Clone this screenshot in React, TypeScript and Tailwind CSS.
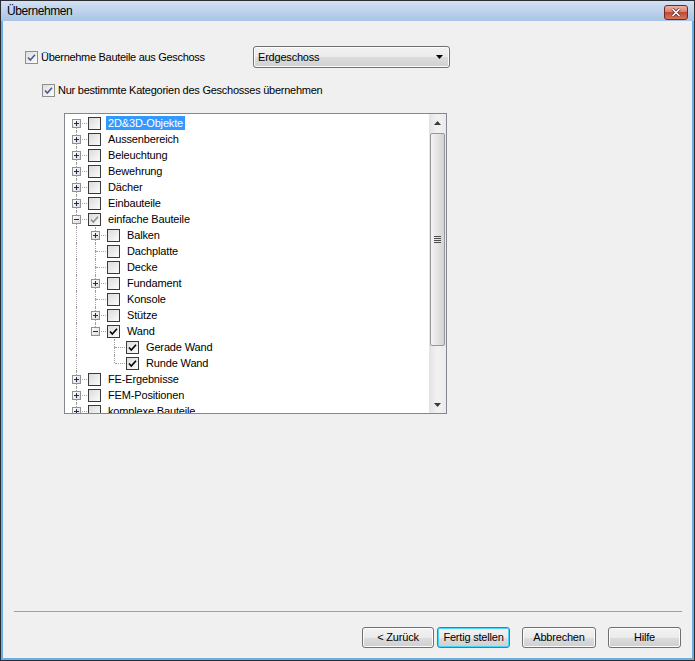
import React from 'react'

type Row = {
  label: string
  level: number
  exp?: '+' | '-'
  check?: 'gray' | 'black'
  first?: boolean
  last?: boolean
  sel?: boolean
  guides?: boolean[]
}

const rows: Row[] = [
  { label: '2D&3D-Objekte', level: 0, exp: '+', first: true, sel: true },
  { label: 'Aussenbereich', level: 0, exp: '+' },
  { label: 'Beleuchtung', level: 0, exp: '+' },
  { label: 'Bewehrung', level: 0, exp: '+' },
  { label: 'Dächer', level: 0, exp: '+' },
  { label: 'Einbauteile', level: 0, exp: '+' },
  { label: 'einfache Bauteile', level: 0, exp: '-', check: 'gray' },
  { label: 'Balken', level: 1, exp: '+', guides: [true] },
  { label: 'Dachplatte', level: 1, guides: [true] },
  { label: 'Decke', level: 1, guides: [true] },
  { label: 'Fundament', level: 1, exp: '+', guides: [true] },
  { label: 'Konsole', level: 1, guides: [true] },
  { label: 'Stütze', level: 1, exp: '+', guides: [true] },
  { label: 'Wand', level: 1, exp: '-', check: 'black', last: true, guides: [true] },
  { label: 'Gerade Wand', level: 2, check: 'black', guides: [true, false] },
  { label: 'Runde Wand', level: 2, check: 'black', last: true, guides: [true, false] },
  { label: 'FE-Ergebnisse', level: 0, exp: '+' },
  { label: 'FEM-Positionen', level: 0, exp: '+' },
  { label: 'komplexe Bauteile', level: 0, exp: '+' },
]

function Tick({ color }: { color: string }) {
  return (
    <svg width="11" height="11" viewBox="0 0 11 11">
      <path d="M2 5.5 L4.3 8 L9 2.8" fill="none" stroke={color} strokeWidth="1.6" />
    </svg>
  )
}

// checkbox inside the tree view (classic state images)
function TreeCheck({ state }: { state?: 'gray' | 'black' }) {
  return (
    <span className="w-[13px] h-[13px] shrink-0 border border-[#3a3a3a] bg-gradient-to-br from-[#dcdcdc] to-[#fbfbfb] flex items-center justify-center">
      {state === 'black' && <Tick color="#000" />}
      {state === 'gray' && <Tick color="#8e8e8e" />}
    </span>
  )
}

// Win7 style dialog checkbox
function DlgCheck() {
  return (
    <span className="w-[13px] h-[13px] shrink-0 border border-[#8e8f8f] bg-gradient-to-br from-[#dedede] to-[#fbfbfb] flex items-center justify-center">
      <Tick color="#4c5c85" />
    </span>
  )
}

function Expander({ sign }: { sign: '+' | '-' }) {
  return (
    <span className="absolute left-[5px] top-[4px] w-[9px] h-[9px] border border-[#919191] bg-gradient-to-br from-white to-[#dcdcdc] flex items-center justify-center">
      <svg width="7" height="7" viewBox="0 0 7 7">
        <path d="M1 3.5 H6" stroke="#1c2d4f" strokeWidth="1" />
        {sign === '+' && <path d="M3.5 1 V6" stroke="#1c2d4f" strokeWidth="1" />}
      </svg>
    </span>
  )
}

function TreeRow({ r }: { r: Row }) {
  return (
    <div className="flex h-[16px] items-center shrink-0">
      {(r.guides ?? []).map((g, i) => (
        <span key={i} className="relative w-[19px] h-[16px] shrink-0">
          {g && <span className="absolute left-[9px] top-0 h-[16px] border-l border-dotted border-[#a0a0a0]" />}
        </span>
      ))}
      <span className="relative w-[19px] h-[16px] shrink-0">
        {!r.first && <span className="absolute left-[9px] top-0 h-[8px] border-l border-dotted border-[#a0a0a0]" />}
        {!r.last && <span className="absolute left-[9px] top-[8px] h-[8px] border-l border-dotted border-[#a0a0a0]" />}
        <span className="absolute left-[10px] top-[8px] w-[10px] border-t border-dotted border-[#a0a0a0]" />
        {r.exp && <Expander sign={r.exp} />}
      </span>
      <span className="ml-[2px]">
        <TreeCheck state={r.check} />
      </span>
      <span
        className={`ml-[5px] px-[2px] h-[14px] leading-[14px] whitespace-nowrap tracking-[-0.15px] ${
          r.sel ? 'bg-[#3399ff] text-white' : 'text-black'
        }`}
      >
        {r.label}
      </span>
    </div>
  )
}

function ScrollBar() {
  return (
    <div className="w-[17px] h-full shrink-0 bg-gradient-to-r from-[#e3e3e3] via-[#f2f2f2] to-[#ebebeb] flex flex-col">
      <div className="h-[17px] flex items-center justify-center">
        <svg width="7" height="4" viewBox="0 0 7 4">
          <path d="M0 4 L3.5 0 L7 4 Z" fill="#3b3b3b" />
        </svg>
      </div>
      <div className="mt-[2px] mx-[1px] h-[213px] rounded-[2px] border border-[#979797] bg-gradient-to-r from-[#f3f3f3] via-[#e4e4e4] to-[#d4d4d4] flex items-center justify-center">
        <div className="flex flex-col gap-[1px]">
          <span className="w-[7px] h-px bg-[#4d4d4d]" />
          <span className="w-[7px] h-px bg-[#4d4d4d]" />
          <span className="w-[7px] h-px bg-[#4d4d4d]" />
          <span className="w-[7px] h-px bg-[#4d4d4d]" />
        </div>
      </div>
      <div className="flex-1" />
      <div className="h-[17px] flex items-center justify-center">
        <svg width="7" height="4" viewBox="0 0 7 4">
          <path d="M0 0 L3.5 4 L7 0 Z" fill="#3b3b3b" />
        </svg>
      </div>
    </div>
  )
}

function Button({ label, width, primary }: { label: string; width: string; primary?: boolean }) {
  return (
    <div
      className={`${width} h-[21px] rounded-[3px] border ${
        primary ? 'border-[#3c7fb1] shadow-[inset_0_0_0_1px_#48d6f8]' : 'border-[#707070] shadow-[inset_0_0_0_1px_#fcfcfc]'
      } bg-[linear-gradient(#f2f2f2_0%,#ebebeb_50%,#dddddd_50%,#cfcfcf_100%)] flex items-center justify-center text-black tracking-[-0.2px]`}
    >
      {label}
    </div>
  )
}

export default function App() {
  return (
    <div className="w-[695px] h-[661px] bg-[#2a2e33] p-px flex flex-col font-['Liberation_Sans',Arial,sans-serif] text-[11px]">
      {/* Title bar */}
      <div className="h-[20px] shrink-0 bg-gradient-to-b from-[#d3e1f2] to-[#a8c4e6] flex items-center pl-[6px] pr-[6px]">
        <span className="text-[12px] text-black tracking-[-0.4px]">Übernehmen</span>
        <div className="ml-auto mt-[2px] w-[24px] h-[15px] rounded-[3px] border border-[#6e2a1f] bg-[linear-gradient(#eab3a6_0%,#d9796a_50%,#c04a34_50%,#d8755c_100%)] flex items-center justify-center">
          <svg width="10" height="9" viewBox="0 0 10 9">
            <path d="M1.5 1 L8.5 8 M8.5 1 L1.5 8" stroke="#5a2a24" strokeWidth="3" />
            <path d="M1.5 1 L8.5 8 M8.5 1 L1.5 8" stroke="#fff" strokeWidth="1.6" />
          </svg>
        </div>
      </div>

      {/* Body */}
      <div className="flex-1 border-x-2 border-b-2 border-[#6aaee2] bg-[#f0f0f0] flex flex-col">
        <div className="mt-[25px] h-[22px] flex items-center">
          <div className="ml-[22px] w-[228px] flex items-center gap-[3px]">
            <DlgCheck />
            <span className="tracking-[-0.3px]">Übernehme Bauteile aus Geschoss</span>
          </div>
          <div className="w-[197px] h-[22px] rounded-[3px] border border-[#707070] shadow-[inset_0_0_0_1px_#fcfcfc] bg-[linear-gradient(#f2f2f2_0%,#ebebeb_50%,#dddddd_50%,#cfcfcf_100%)] flex items-center pl-[4px] pr-[6px]">
            <span className="text-black tracking-[-0.2px]">Erdgeschoss</span>
            <svg className="ml-auto" width="7" height="4" viewBox="0 0 7 4">
              <path d="M0 0 L3.5 4 L7 0 Z" fill="#000" />
            </svg>
          </div>
        </div>

        <div className="mt-[15px] ml-[39px] h-[14px] flex items-center gap-[3px]">
          <DlgCheck />
          <span className="tracking-[-0.25px]">Nur bestimmte Kategorien des Geschosses übernehmen</span>
        </div>

        {/* Tree view */}
        <div className="mt-[16px] ml-[61px] w-[383px] h-[301px] border border-[#828790] bg-white flex overflow-hidden">
          <div className="flex-1 pl-[2px] pt-[1px] flex flex-col overflow-hidden">
            {rows.map((r, i) => (
              <TreeRow key={i} r={r} />
            ))}
          </div>
          <ScrollBar />
        </div>

        <div className="mt-[197px] ml-[11px] w-[668px] h-px bg-[#a0a0a0]" />

        <div className="mt-[15px] flex">
          <div className="ml-[359px] flex gap-[3px]">
            <Button label="< Zurück" width="w-[72px]" />
            <Button label="Fertig stellen" width="w-[73px]" primary />
          </div>
          <div className="ml-[12px] flex gap-[12px]">
            <Button label="Abbrechen" width="w-[74px]" />
            <Button label="Hilfe" width="w-[73px]" />
          </div>
        </div>
      </div>
    </div>
  )
}
